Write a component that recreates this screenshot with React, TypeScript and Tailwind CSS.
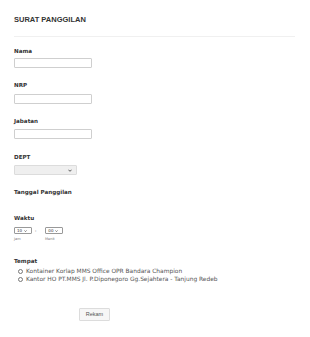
import React from "react";

const Chevron = ({ className = "" }: { className?: string }) => (
  <svg viewBox="0 0 10 6" className={className} fill="none" stroke="#333" strokeWidth="2">
    <path d="M1 1 L5 5 L9 1" />
  </svg>
);

const Label = ({ children, mt }: { children: React.ReactNode; mt: string }) => (
  <div
    className={`${mt} h-[7px] leading-[7px] text-[5.6px] font-bold text-[#333]`}
    style={{ fontFamily: '"DejaVu Sans", Verdana, sans-serif' }}
  >
    {children}
  </div>
);

const Input = ({ mt }: { mt: string }) => (
  <div className={`${mt} h-[10px] w-[78px] border border-[#cfcfcf] rounded-[1px] bg-white`} />
);

export default function App() {
  const dv = { fontFamily: '"DejaVu Sans", Verdana, sans-serif' };
  return (
    <div className="w-[310px] h-[337px] bg-white overflow-hidden">
      <div className="pl-[14px] flex flex-col items-start">
        <div
          className="mt-[16px] h-[8px] leading-[8px] text-[7.5px] font-bold text-[#333]"
          style={{ fontFamily: '"Liberation Sans", Arial, sans-serif' }}
        >
          SURAT PANGGILAN
        </div>
        <div className="mt-[12px] h-px w-[281px] bg-[#f0f0f0]" />

        <Label mt="mt-[11px]">Nama</Label>
        <Input mt="mt-[3px]" />

        <Label mt="mt-[14px]">NRP</Label>
        <Input mt="mt-[5px]" />

        <Label mt="mt-[14px]">Jabatan</Label>
        <Input mt="mt-[4px]" />

        <Label mt="mt-[15px]">DEPT</Label>
        <div className="mt-[4px] h-[10px] w-[63px] border border-[#dcdcdc] rounded-[1px] bg-[#efefef] flex items-center justify-end pr-[4px]">
          <Chevron className="w-[4px] h-[3px]" />
        </div>

        <Label mt="mt-[14px]">Tanggal Panggilan</Label>

        <Label mt="mt-[19px]">Waktu</Label>
        <div className="mt-[5px] h-[7px] flex items-center text-[4px] text-[#333]" style={dv}>
          <div className="h-[7px] w-[18px] border border-[#999] rounded-[1px] flex items-center pl-[2px] gap-[2px]">
            <span className="leading-none">10</span>
            <Chevron className="w-[3px] h-[2px]" />
          </div>
          <span className="ml-[3px] leading-none">:</span>
          <div className="ml-[9px] h-[7px] w-[18px] border border-[#999] rounded-[1px] flex items-center pl-[2px] gap-[2px]">
            <span className="leading-none">00</span>
            <Chevron className="w-[3px] h-[2px]" />
          </div>
        </div>
        <div className="mt-[3px] h-[4px] flex text-[3.5px] leading-[4px] text-[#777]" style={dv}>
          <span className="w-[31px]">Jam</span>
          <span>Menit</span>
        </div>

        <Label mt="mt-[17px]">Tempat</Label>
        <div className="mt-[2px] flex flex-col text-[5.9px] text-[#555]" style={dv}>
          {[
            "Kontainer Korlap MMS Office OPR Bandara Champion",
            "Kantor HO PT.MMS Jl. P.Diponegoro Gg.Sejahtera - Tanjung Redeb",
          ].map((t) => (
            <div key={t} className="h-[8px] flex items-center">
              <span className="ml-[4px] w-[5px] h-[5px] rounded-full border border-[#777] bg-white" />
              <span className="ml-[3px] leading-[8px] whitespace-nowrap">{t}</span>
            </div>
          ))}
        </div>

        <div
          className="mt-[25px] ml-[65px] h-[13px] w-[31px] border border-[#dcdcdc] rounded-[1px] bg-[#f6f6f6] flex items-center justify-center text-[5.5px] text-[#555]"
          style={{ fontFamily: '"Liberation Sans", Arial, sans-serif' }}
        >
          Rekam
        </div>
      </div>
    </div>
  );
}
